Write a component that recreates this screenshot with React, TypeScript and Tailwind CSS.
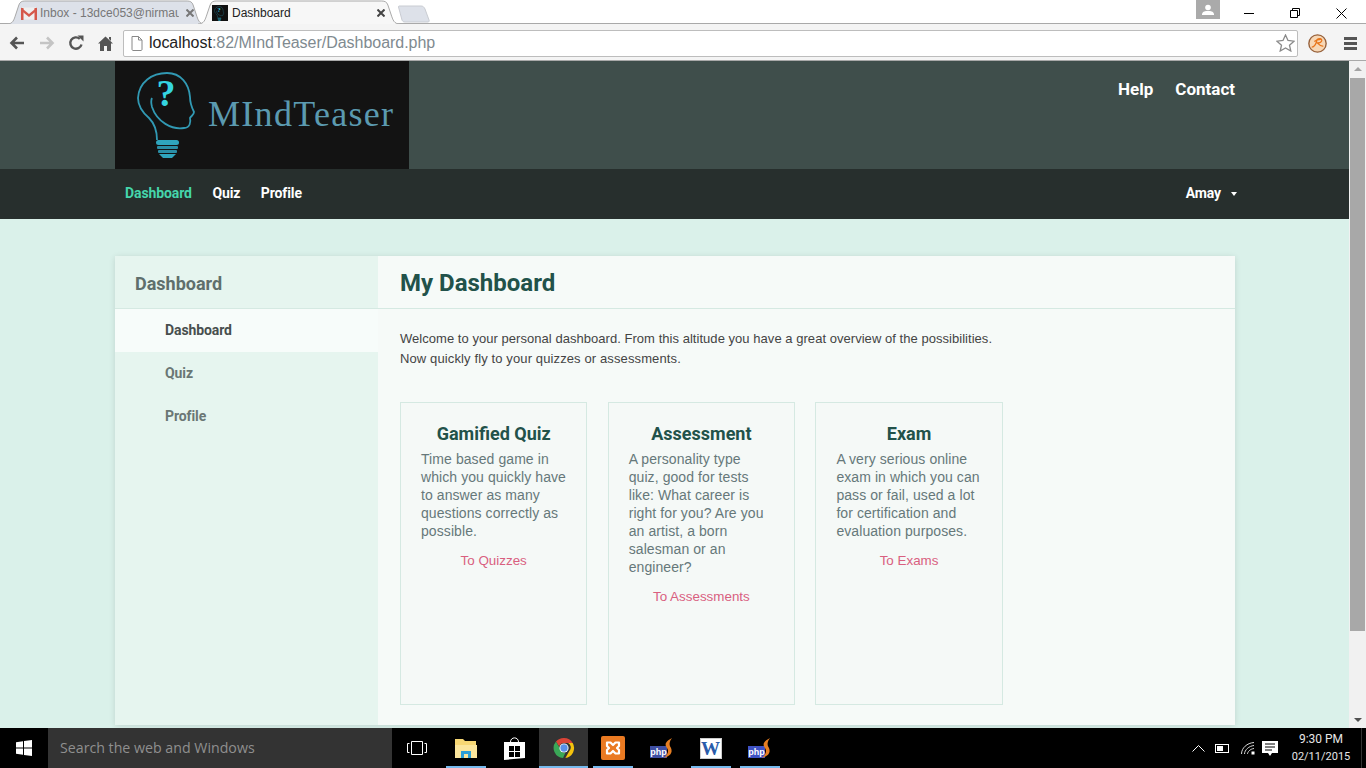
const sans = "font-['Liberation_Sans',Arial,sans-serif]";

const cards = [
  {
    title: "Gamified Quiz",
    lines: ["Time based game in", "which you quickly have", "to answer as many", "questions correctly as", "possible."],
    link: "To Quizzes",
  },
  {
    title: "Assessment",
    lines: ["A personality type", "quiz, good for tests", "like: What career is", "right for you? Are you", "an artist, a born", "salesman or an", "engineer?"],
    link: "To Assessments",
  },
  {
    title: "Exam",
    lines: ["A very serious online", "exam in which you can", "pass or fail, used a lot", "for certification and", "evaluation purposes."],
    link: "To Exams",
  },
];

const TabShape = ({ active }: { active: boolean }) => (
  <svg className="absolute inset-0 h-full w-full" viewBox="0 0 200 24" preserveAspectRatio="none">
    <path
      d="M0 24 C6 24 7 20 9 14 L12 5 C13 2 15 1 18 1 L182 1 C185 1 187 2 188 5 L191 14 C193 20 194 24 200 24"
      fill={active ? "#f7f7f7" : "#dde1e9"}
      stroke="#a9a9a9"
      vectorEffect="non-scaling-stroke"
    />
  </svg>
);

const TabClose = ({ color }: { color: string }) => (
  <svg className="relative shrink-0" width="8" height="8" viewBox="0 0 8 8" fill="none" stroke={color} strokeWidth="2">
    <path d="M0.500 0.500 7.500 7.500M7.500 0.500 0.500 7.500" />
  </svg>
);

const GmailIcon = () => (
  <svg width="16" height="13" viewBox="0 0 16 13">
    <rect x="0.500" y="0.500" width="15" height="12" fill="#efefef" />
    <path d="M0 1h2.500v12H0zM13.500 1H16v12h-2.500z" fill="#d5584b" />
    <path d="M0 0.500 8 7l8-6.500v3L8 10 0 3.500z" fill="#d5584b" />
  </svg>
);

const BulbIcon = ({ size = 68, h = 90 }: { size?: number; h?: number }) => (
  <svg width={size} height={h} viewBox="0 0 68 90" fill="none">
    <path
      d="M20 70C20 60 17 53 12 48C5 42 1 36 1 28C2 12 15 3 30 3C44 3 52 14 53 27C53 32 54 36 57 42C57 45 54 46 53 48C54 52 53 58 47 58C35 60 20 52 15 37C14 33 14 30 15 28"
      stroke="#3199b3"
      strokeWidth="1.800"
    />
    <text x="29" y="36" textAnchor="middle" fontFamily="Liberation Serif, serif" fontWeight="700" fontSize="38" fill="#35d5e0">
      ?
    </text>
    <rect x="19" y="70" width="23" height="5" rx="2.500" fill="#2fa5bd" />
    <rect x="20" y="76" width="21" height="3" rx="1" fill="#2a8ea6" />
    <rect x="21" y="80" width="19" height="3" rx="1" fill="#2a8ea6" />
    <path d="M22 84H39L35 88H26z" fill="#2fa5bd" />
  </svg>
);

const ChromeIcon = () => (
  <svg width="22" height="22" viewBox="0 0 48 48">
    <path d="M24 2a22 22 0 0 1 19 11H24a11 11 0 0 0-10.500 7.500L6.500 10A22 22 0 0 1 24 2z" fill="#db4437" />
    <path d="M43 13a22 22 0 0 1-16 33l9-16a11 11 0 0 0-3-17z" fill="#f4c20d" />
    <path d="M6.500 10l9 15.500A11 11 0 0 0 27 34.500L22 46A22 22 0 0 1 6.500 10z" fill="#3aa757" />
    <circle cx="24" cy="24" r="10" fill="#fff" />
    <circle cx="24" cy="24" r="8" fill="#5a90e8" />
  </svg>
);

const PhpIcon = ({ bright }: { bright?: boolean }) => (
  <span className="relative block h-[20px] w-[23px]">
    <span className={`absolute bottom-0 left-0 flex h-[12px] w-[17px] items-center justify-center text-[9px] font-bold leading-none text-white ${bright ? "bg-[#3f52c4]" : "bg-[#3f4fa3]"} ${sans}`}>
      php
    </span>
    <svg className="absolute right-0 top-0" width="9" height="20" viewBox="0 0 9 20">
      <path d="M8 0C2 3 0 6 3 10c2 3 1 6-3 10 6-2 9-5 7-10C5 7 5 4 8 0z" fill="#e67e22" />
    </svg>
  </span>
);

const TaskItem = ({ active, running, children }: { active?: boolean; running?: boolean; children: React.ReactNode }) => (
  <div className={`relative flex h-[40px] w-[49px] items-center justify-center ${active ? "bg-[#333]" : ""}`}>
    {children}
    {running && <span className={`absolute bottom-0 h-[2px] bg-[#76b9ed] ${active ? "left-0 right-0" : "left-[5px] right-[4px]"}`} />}
  </div>
);

export default function App() {
  return (
    <div className={`flex h-[768px] w-[1366px] flex-col overflow-hidden bg-[#daf1ea] ${sans}`}>
      {/* chrome window */}
      <div className="relative flex h-[24px] shrink-0 items-end bg-white pl-[7px]">
        <div className="absolute bottom-0 left-0 right-0 h-px bg-[#a9a9a9]" />
        <div className="relative flex h-[24px] w-[198px] items-center pl-[14px] pt-[2px]">
          <TabShape active={false} />
          <span className="relative flex items-center gap-[3px]">
            <GmailIcon />
            <span className="w-[139px] overflow-hidden whitespace-nowrap text-[12px] text-[#777]">Inbox - 13dce053@nirmauni</span>
          </span>
          <span className="ml-[7px] flex">
            <TabClose color="#777" />
          </span>
        </div>
        <div className="relative -ml-[7px] flex h-[24px] w-[202px] items-center pl-[14px] pt-[2px]">
          <TabShape active />
          <span className="relative flex items-center gap-[4px]">
            <span className="flex h-[16px] w-[16px] items-center justify-center overflow-hidden bg-[#111]">
              <BulbIcon size={12} h={15} />
            </span>
            <span className="w-[145px] text-[12px] text-[#222]">Dashboard</span>
          </span>
          <TabClose color="#444" />
        </div>
        <svg className="relative -ml-[2px] mb-[1px]" width="34" height="18" viewBox="0 0 34 18">
          <path d="M1 1H23C25 1 26 2 27 4L31 15C31.500 16 31 17 30 17H7C5 17 4.500 16 4 15L0.500 2C0.500 1.500 0.500 1 1 1z" fill="#dde1e9" stroke="#c9ccd2" />
        </svg>
        <div className="ml-auto flex h-[24px] items-start pr-[2px]">
          <div className="mr-[6px] flex h-[19px] w-[24px] items-center justify-center bg-[#aaa]">
            <svg width="12" height="12" viewBox="0 0 12 12" fill="#fff">
              <circle cx="6" cy="3.500" r="2.800" />
              <path d="M0 10c1-3 3-3 6-3s5 0 6 3v1H0z" />
            </svg>
          </div>
          <div className="flex h-[24px] w-[46px] items-center justify-center pt-[2px]">
            <span className="h-px w-[10px] bg-black" />
          </div>
          <div className="flex h-[24px] w-[46px] items-center justify-center pt-[2px]">
            <svg width="10" height="10" viewBox="0 0 10 10" fill="none" stroke="#000">
              <path d="M0.500 2.500H7.500V9.500H0.500zM2.500 2.500V0.500H9.500V7.500H7.500" />
            </svg>
          </div>
          <div className="flex h-[24px] w-[46px] items-center justify-center pt-[2px]">
            <svg width="11" height="11" viewBox="0 0 11 11" fill="none" stroke="#000">
              <path d="M0.500 0.500 10.500 10.500M10.500 0.500 0.500 10.500" />
            </svg>
          </div>
        </div>
      </div>

      <div className="flex h-[37px] shrink-0 items-center border-b border-[#a9a9a9] bg-[#f4f4f4] pt-[2px]">
        <div className="flex w-[123px] items-center pl-[9px]">
          <svg width="16" height="14" viewBox="0 0 16 14" fill="none" stroke="#555" strokeWidth="2.600">
            <path d="M15 7H3M8 1.500 2.500 7 8 12.500" />
          </svg>
          <svg className="ml-[14px]" width="16" height="14" viewBox="0 0 16 14" fill="none" stroke="#c4c4c4" strokeWidth="2.600">
            <path d="M1 7H13M8 1.500 13.500 7 8 12.500" />
          </svg>
          <svg className="ml-[13px]" width="16" height="16" viewBox="0 0 16 16" fill="none">
            <path d="M13.500 9.500A5.700 5.700 0 1 1 11.800 3.800" stroke="#555" strokeWidth="2.400" />
            <path d="M9.500 0.500H15.500V6.500z" fill="#555" />
          </svg>
          <svg className="ml-[14px]" width="15" height="15" viewBox="0 0 15 15" fill="#555">
            <path d="M7.500 0.500 15 7.500H13V15H9V10H6V15H2V7.500H0z" />
            <path d="M11 1h2v4l-2-2z" />
          </svg>
        </div>
        <div className="flex h-[27px] w-[1175px] items-center rounded-[2px] border border-[#bdbdbd] bg-white pl-[7px] pr-[2px]">
          <svg width="12" height="15" viewBox="0 0 12 15" fill="#fff" stroke="#888">
            <path d="M1 0.500H7.500L11 4V13.500C11 14 10.500 14.500 10 14.500H2C1.500 14.500 1 14 1 13.500zM7.500 0.500V4H11" />
          </svg>
          <span className="ml-[6px] text-[16px] tracking-[-0.03px] text-[#222]">
            localhost<span className="text-[#808a90]">:82/MIndTeaser/Dashboard.php</span>
          </span>
          <svg className="ml-auto" width="19" height="18" viewBox="0 0 19 18" fill="#fff" stroke="#8a8a8a" strokeWidth="1.300">
            <path d="M9.500 1 12 6.500 18 7.200 13.500 11.200 14.800 17 9.500 14 4.200 17 5.500 11.200 1 7.200 7 6.500z" />
          </svg>
        </div>
        <svg className="ml-[10px]" width="19" height="19" viewBox="0 0 18 18" fill="none">
          <circle cx="9" cy="9" r="8.200" fill="#f7d7b5" stroke="#96603a" strokeWidth="1.300" />
          <path d="M3.500 12.500C6 12.500 8 9 8.500 5.500C10 4 13.500 4 13 6.500C12.500 8 10 8.500 9 8.500C10.500 10 12 12 14.500 11.500M6 7c2-1.500 5-2 6-2" stroke="#e8751a" strokeWidth="1.200" />
        </svg>
        <div className="ml-[17px] flex w-[13px] flex-col gap-[2px]">
          <span className="h-[3px] bg-[#555]" />
          <span className="h-[3px] bg-[#555]" />
          <span className="h-[3px] bg-[#555]" />
        </div>
      </div>

      {/* page + scrollbar */}
      <div className="flex h-[667px] shrink-0">
        <div className="w-[1349px] shrink-0">
          <header className="h-[108px] bg-[#3f4e4b] pl-[115px] pr-[114px]">
            <div className="flex h-full items-start justify-between">
              <div className="flex h-[108px] w-[294px] items-start bg-[#131313] pl-[22px] pt-[9px]">
                <BulbIcon />
                <span className="ml-[3px] mt-[22px] whitespace-nowrap font-['Liberation_Serif',serif] text-[36px] leading-[44px] tracking-[1.3px] text-[#5b9ab0]">
                  MIndTeaser
                </span>
              </div>
              <div className="flex gap-[22px] pt-[18px] font-['Roboto',sans-serif] text-[17px] font-bold leading-[20px] text-white">
                <span>Help</span>
                <span>Contact</span>
              </div>
            </div>
          </header>

          <nav className="flex h-[50px] items-center justify-between bg-[#272f2d] pb-[1px] pl-[125px] pr-[112px] font-['Roboto',sans-serif] text-[14px] font-bold tracking-[-0.1px] text-white">
            <div className="flex gap-[20.5px]">
              <span className="text-[#45d6ab]">Dashboard</span>
              <span>Quiz</span>
              <span>Profile</span>
            </div>
            <div className="flex items-center gap-[10px]">
              <span>Amay</span>
              <span className="h-0 w-0 border-x-[3px] border-t-[4px] border-x-transparent border-t-white" />
            </div>
          </nav>

          <main className="pl-[115px] pr-[114px] pt-[37px]">
            <div className="flex h-[469px] bg-[#f6faf8] shadow-[0_1px_6px_rgba(0,0,0,0.12)]">
              <aside className="w-[263px] shrink-0 bg-[#e6f5ef] font-['Roboto',sans-serif]">
                <div className="flex h-[53px] items-center border-b border-[#d5e9e2] pl-[20px] pt-[2px] text-[18px] font-bold text-[#5f6f6c]">
                  Dashboard
                </div>
                <div className="flex h-[43px] items-center bg-[#f7fcfa] pl-[50px] text-[14px] font-bold tracking-[-0.1px] text-[#484f4e]">Dashboard</div>
                <div className="flex h-[43px] items-center pl-[50px] text-[14px] font-bold tracking-[-0.1px] text-[#6a7775]">Quiz</div>
                <div className="flex h-[43px] items-center pl-[50px] text-[14px] font-bold tracking-[-0.1px] text-[#6a7775]">Profile</div>
              </aside>

              <section className="min-w-0 flex-1">
                <div className="flex h-[53px] items-center border-b border-[#d5e9e2] pl-[22px] pt-[2px] font-['Roboto',sans-serif] text-[24px] font-bold text-[#22524a]">
                  My Dashboard
                </div>
                <div className="px-[22px] pt-[20px]">
                  <p className="text-[13px] leading-[20px] tracking-[0.04px] text-[#444]">
                    Welcome to your personal dashboard. From this altitude you have a great overview of the possibilities.
                    <br />
                    <span className="tracking-[0.12px]">Now quickly fly to your quizzes or assessments.</span>
                  </p>
                  <div className="mt-[33px] flex gap-[20.3px]">
                    {cards.map((c) => (
                      <div key={c.title} className="h-[303px] w-[187.4px] border border-[#d5e9e2] bg-[#f5f9f7] px-[20px] pt-[20px]">
                        <h3 className="text-center font-['Roboto',sans-serif] text-[18px] font-bold leading-[21px] text-[#22524a]">{c.title}</h3>
                        <p className="mt-[6px] whitespace-nowrap text-[14px] leading-[18px] tracking-[0.08px] text-[#66787a]">
                          {c.lines.map((l) => (
                            <span key={l} className="block">{l}</span>
                          ))}
                        </p>
                        <p className="mt-[12px] text-center text-[13.4px] leading-[18px] text-[#d9607f]">{c.link}</p>
                      </div>
                    ))}
                  </div>
                </div>
              </section>
            </div>
          </main>
        </div>

        <div className="flex w-[17px] shrink-0 flex-col items-center bg-[#f1f1f1]">
          <span className="mt-[6px] h-0 w-0 border-x-[4px] border-b-[4px] border-x-transparent border-b-[#a3a3a3]" />
          <div className="mt-[7px] h-[553px] w-[15px] bg-[#a8a8a8]" />
          <span className="mb-[6px] mt-auto h-0 w-0 border-x-[4px] border-t-[4px] border-x-transparent border-t-[#505050]" />
        </div>
      </div>

      {/* taskbar */}
      <div className="flex h-[40px] shrink-0 items-center bg-black">
        <div className="flex h-[40px] w-[48px] items-center justify-center">
          <svg width="16" height="16" viewBox="0 0 16 16" fill="#fff">
            <path d="M0 2.300 7 1.300V7.500H0zM8 1.100 16 0V7.500H8zM0 8.500H7V14.700L0 13.700zM8 8.500H16V16L8 14.900z" />
          </svg>
        </div>
        <div className="flex h-[40px] w-[344px] items-center bg-[#333] pl-[12px] font-['Open_Sans',sans-serif] text-[14.2px] text-[#8f8f8f]">
          Search the web and Windows
        </div>
        <div className="flex items-center">
          <TaskItem>
            <svg width="20" height="14" viewBox="0 0 20 14" fill="none" stroke="#fff">
              <path d="M4.500 0.500H15.500V13.500H4.500zM2.500 2.500H0.500V11.500H2.500M17.500 2.500H19.500V11.500H17.500" />
            </svg>
          </TaskItem>
          <TaskItem running>
            <svg width="22" height="19" viewBox="0 0 22 19">
              <path d="M0 0H8L10 2H21V18H0z" fill="#f7d774" />
              <path d="M0 6H22V19H0z" fill="#fbe59c" />
              <path d="M6 19V12H16V19H13V15H9V19z" fill="#2c9fd8" />
            </svg>
          </TaskItem>
          <TaskItem>
            <svg width="21" height="24" viewBox="0 0 21 24" fill="#fff">
              <path d="M6.500 6C6.500 0.500 14.500 0.500 14.500 6" fill="none" stroke="#fff" />
              <path d="M0 6H21V22L0 24z" />
              <path d="M5 10h5v5H5zM11 10h5v5h-5zM5 16h5v5H5zM11 16h5v5h-5z" fill="#000" />
            </svg>
          </TaskItem>
          <TaskItem active running>
            <ChromeIcon />
          </TaskItem>
          <TaskItem running>
            <svg width="24" height="24" viewBox="0 0 24 24" fill="none">
              <rect width="24" height="24" rx="2" fill="#ea7a22" />
              <path d="M6 6.500H9.500L12 9 14.500 6.500H18V10L16 12 18 14V17.500H14.500L12 15 9.500 17.500H6V14L8 12 6 10z" stroke="#fff" strokeWidth="2.200" strokeLinejoin="round" />
            </svg>
          </TaskItem>
          <TaskItem>
            <PhpIcon />
          </TaskItem>
          <TaskItem running>
            <span className="relative flex h-[21px] w-[22px] items-center justify-center border border-[#ccc] bg-white font-['Liberation_Serif',serif] text-[19px] font-bold leading-none text-[#2a5caa]">
              W
            </span>
          </TaskItem>
          <TaskItem running>
            <PhpIcon bright />
          </TaskItem>
        </div>
        <div className="ml-auto flex h-[40px] items-center text-white">
          <svg width="13" height="8" viewBox="0 0 13 8" fill="none" stroke="#fff">
            <path d="M0.500 7.500 6.500 1.500 12.500 7.500" />
          </svg>
          <svg className="ml-[10px]" width="15" height="9" viewBox="0 0 15 9" fill="none">
            <rect x="0.500" y="0.500" width="13" height="8" stroke="#fff" />
            <rect x="2" y="2" width="6" height="5" fill="#fff" />
          </svg>
          <svg className="ml-[11px]" width="14" height="13" viewBox="0 0 14 13" fill="none" stroke="#d8d8d8">
            <path d="M0.500 12C0.500 6 6 1 13 0.500M3.500 12C3.500 8 8 4 13 3.500M6.500 12C6.500 10 9 7 13 6.500" />
            <rect x="10.500" y="9.500" width="3" height="3" fill="#fff" stroke="none" />
          </svg>
          <svg className="ml-[7px]" width="16" height="15" viewBox="0 0 16 15">
            <path d="M0 0H16V12H10L8 15 6 12H0z" fill="#fff" />
            <path d="M3 3H13M3 6H13M3 9H10" stroke="#000" />
          </svg>
          <div className="ml-[7px] w-[72px] text-center font-['Roboto',sans-serif] text-[12px] leading-[17px] text-[#e6e6e6]">
            <div>9:30 PM</div>
            <div className="text-[11px]">02/11/2015</div>
          </div>
          <span className="ml-[4px] h-[40px] w-px bg-[#333]" />
          <span className="w-[4px]" />
        </div>
      </div>
    </div>
  );
}
